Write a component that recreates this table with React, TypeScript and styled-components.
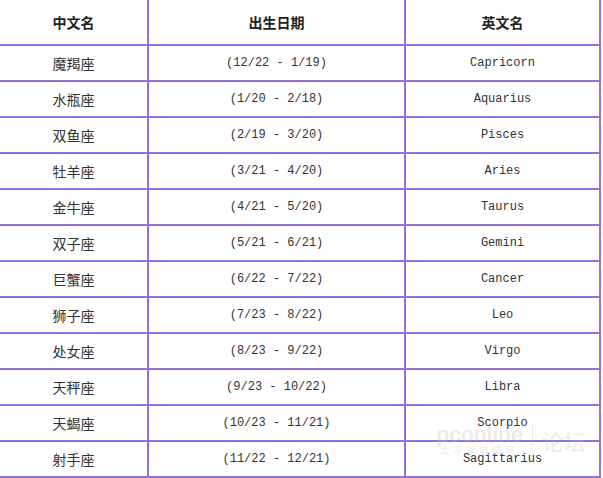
import { Fragment } from "react";
import styled, { createGlobalStyle } from "styled-components";

const GlobalStyle = createGlobalStyle`
  html, body {
    margin: 0;
    padding: 0;
    background: #fff;
    overflow: hidden;
  }
`;

const Page = styled.div`
  position: relative;
  width: 603px;
  height: 478px;
  background: #fff;
`;

const Grid = styled.div`
  display: grid;
  grid-template-columns: 147px 255px 193px;
  grid-template-rows: 44px repeat(12, 34px);
  gap: 2px;
  width: max-content;
  padding: 0 2px 2px 0;
  background: #9370db;
`;

const Cell = styled.div<{ $head?: boolean; $latin?: boolean }>`
  display: flex;
  align-items: center;
  justify-content: center;
  background: #fff;
  color: ${(p) => (p.$head ? "#222" : "#333")};
  font-family: ${(p) =>
    p.$latin
      ? '"Liberation Mono", "DejaVu Sans Mono", monospace'
      : '"Noto Sans CJK SC", "Noto Sans", sans-serif'};
  font-size: ${(p) => (p.$latin ? "12px" : "14px")};
  font-weight: ${(p) => (p.$head ? 700 : 400)};
  white-space: pre;
`;

const Watermark = styled.div`
  position: absolute;
  left: 436px;
  top: 424px;
  display: flex;
  align-items: center;
  gap: 10px;
  pointer-events: none;
  color: rgba(190, 190, 190, 0.3);
`;

const MarkLogo = styled.div`
  display: flex;
  flex-direction: column;
  align-items: center;
  font-family: "Liberation Sans", sans-serif;
  font-size: 22px;
  font-weight: 700;
  line-height: 22px;
  letter-spacing: -0.5px;

  small {
    font-family: "Noto Sans CJK SC", sans-serif;
    font-size: 9px;
    line-height: 10px;
    letter-spacing: 4px;
    font-weight: 400;
  }
`;

const MarkWord = styled.div`
  font-family: "Noto Sans CJK SC", sans-serif;
  font-size: 22px;
  border-left: 1px solid rgba(190, 190, 190, 0.3);
  padding-left: 8px;
`;

const signs: [string, string, string][] = [
  ["魔羯座", "(12/22 - 1/19)", "Capricorn"],
  ["水瓶座", "(1/20 - 2/18)", "Aquarius"],
  ["双鱼座", "(2/19 - 3/20)", "Pisces"],
  ["牡羊座", "(3/21 - 4/20)", "Aries"],
  ["金牛座", "(4/21 - 5/20)", "Taurus"],
  ["双子座", "(5/21 - 6/21)", "Gemini"],
  ["巨蟹座", "(6/22 - 7/22)", "Cancer"],
  ["狮子座", "(7/23 - 8/22)", "Leo"],
  ["处女座", "(8/23 - 9/22)", "Virgo"],
  ["天秤座", "(9/23 - 10/22)", "Libra"],
  ["天蝎座", "(10/23 - 11/21)", "Scorpio"],
  ["射手座", "(11/22 - 12/21)", "Sagittarius"],
];

export default function App() {
  return (
    <Page>
      <GlobalStyle />
      <Grid>
        <Cell $head>中文名</Cell>
        <Cell $head>出生日期</Cell>
        <Cell $head>英文名</Cell>
        {signs.map(([cn, date, en]) => (
          <Fragment key={en}>
            <Cell>{cn}</Cell>
            <Cell $latin>{date}</Cell>
            <Cell $latin>{en}</Cell>
          </Fragment>
        ))}
      </Grid>
      <Watermark>
        <MarkLogo>
          pconline
          <small>太平洋电脑网</small>
        </MarkLogo>
        <MarkWord>论坛</MarkWord>
      </Watermark>
    </Page>
  );
}
